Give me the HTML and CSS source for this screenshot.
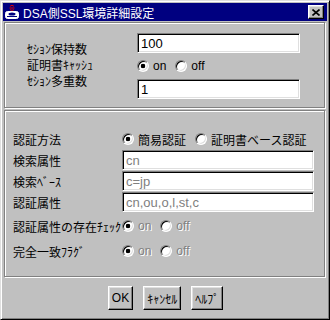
FILE: index.html
```html
<!DOCTYPE html>
<html lang="ja">
<head>
<meta charset="utf-8">
<title>DSA側SSL環境詳細設定</title>
<link rel="stylesheet" href="styles.css">
</head>
<body>
<div class="window">
  <div class="titlebar">
    <svg class="app-icon" width="16" height="16" viewBox="0 0 16 16">
      <path d="M6 2.5c1-1.5 3-1.5 4 0M5.5 4h5M6 5.5c1 1 3 1 4 0" stroke="#e00000" fill="none"/>
      <rect x="1.5" y="7.5" width="13" height="7" rx="2" fill="#fff" stroke="#fff"/>
      <ellipse cx="8" cy="10" rx="3.5" ry="1.5" fill="#000080"/>
      <path d="M3 12.5h10" stroke="#000080"/>
    </svg>
    <span class="title">DSA側SSL環境詳細設定</span>
    <span class="close-btn">
      <svg width="8" height="7" viewBox="0 0 8 7"><path d="M0.5 0.5L7.5 6.5M7.5 0.5L0.5 6.5" stroke="#000" stroke-width="1.6"/></svg>
    </span>
  </div>

  <div class="panel panel-session">
    <div class="session-labels">
      <div class="label">ｾｼｮﾝ保持数</div>
      <div class="label">証明書ｷｬｯｼｭ</div>
      <div class="label">ｾｼｮﾝ多重数</div>
    </div>
    <div class="session-controls">
      <div class="field">100</div>
      <div class="radio-group row-cache">
        <span class="radio checked"></span><span class="opt">on</span>
        <span class="radio"></span><span class="opt">off</span>
      </div>
      <div class="field">1</div>
    </div>
  </div>

  <div class="panel panel-auth">
    <div class="row row-method">
      <div class="label auth-label">認証方法</div>
      <div class="radio-group">
        <span class="radio checked"></span><span class="opt">簡易認証</span>
        <span class="radio"></span><span class="opt">証明書ベース認証</span>
      </div>
    </div>
    <div class="row row-field">
      <div class="label auth-label">検索属性</div>
      <div class="field wide disabled">cn</div>
    </div>
    <div class="row row-field">
      <div class="label auth-label">検索ﾍﾞｰｽ</div>
      <div class="field wide disabled">c=jp</div>
    </div>
    <div class="row row-field">
      <div class="label auth-label">認証属性</div>
      <div class="field wide disabled">cn,ou,o,l,st,c</div>
    </div>
    <div class="row row-check">
      <div class="label auth-label">認証属性の存在ﾁｪｯｸ</div>
      <div class="radio-group">
        <span class="radio checked"></span><span class="opt disabled-text">on</span>
        <span class="radio"></span><span class="opt disabled-text">off</span>
      </div>
    </div>
    <div class="row row-flag">
      <div class="label auth-label">完全一致ﾌﾗｸﾞ</div>
      <div class="radio-group">
        <span class="radio checked"></span><span class="opt disabled-text">on</span>
        <span class="radio"></span><span class="opt disabled-text">off</span>
      </div>
    </div>
  </div>

  <div class="buttons">
    <span class="btn">OK</span>
    <span class="btn">ｷｬﾝｾﾙ</span>
    <span class="btn">ﾍﾙﾌﾟ</span>
  </div>
</div>
</body>
</html>
```

FILE: styles.css
```css
html, body {
  margin: 0;
  padding: 0;
  background: #c0c0c0;
}

.window {
  box-sizing: border-box;
  width: 330px;
  height: 320px;
  border: 1px solid;
  border-color: #dfdfdf #000 #000 #dfdfdf;
  box-shadow: inset 1px 1px 0 #fff, inset -1px -1px 0 #808080;
  padding: 2px;
  background: #c0c0c0;
  display: flex;
  flex-direction: column;
  font-family: "Liberation Sans", "Noto Sans CJK JP", sans-serif;
  font-size: 12px;
  color: #000;
}

/* title bar */
.titlebar {
  height: 18px;
  flex: none;
  background: #000080;
  display: flex;
  align-items: center;
  padding: 0 3px 0 1px;
}
.app-icon {
  flex: none;
  display: block;
}
.title {
  color: #fff;
  font-size: 12px;
  margin-left: 3px;
  flex: 1;
  white-space: nowrap;
}
.close-btn {
  box-sizing: border-box;
  width: 16px;
  height: 14px;
  flex: none;
  background: #c0c0c0;
  border: 1px solid;
  border-color: #fff #000 #000 #fff;
  box-shadow: inset -1px -1px 0 #808080, inset 1px 1px 0 #dfdfdf;
  display: flex;
  align-items: center;
  justify-content: center;
}
.close-btn svg { display: block; }

/* etched panels */
.panel {
  box-sizing: border-box;
  border: 1px solid #808080;
  box-shadow: inset 1px 1px 0 #fff, 1px 1px 0 #fff;
  margin-left: 1px;
  margin-right: 2px;
  flex: none;
}

.panel-session {
  margin-top: 1px;
  height: 86px;
  display: flex;
  padding: 10px 0 0 22px;
}
.session-labels {
  width: 110px;
  flex: none;
  margin-top: 9px;
  display: flex;
  flex-direction: column;
}
.session-labels .label {
  height: 16px;
  line-height: 16px;
}
.session-controls {
  width: 163px;
  display: flex;
  flex-direction: column;
}
.row-cache {
  height: 26px;
}

.label {
  white-space: nowrap;
  font-size: 12px;
}

/* fields */
.field {
  box-sizing: border-box;
  height: 20px;
  border: 1px solid;
  border-color: #808080 #fff #fff #808080;
  box-shadow: inset 1px 1px 0 #000, inset -1px -1px 0 #dfdfdf;
  background: #fff;
  padding: 0 3px;
  font-size: 13px;
  display: flex;
  align-items: center;
  white-space: nowrap;
}
.field.wide { width: 192px; }
.field.disabled { color: #808080; }

/* radios */
.radio-group {
  display: flex;
  align-items: center;
}
.radio {
  box-sizing: border-box;
  width: 12px;
  height: 12px;
  flex: none;
  border-radius: 50%;
  border: 1px solid;
  border-color: #808080 #fff #fff #808080;
  box-shadow: inset 1px 1px 0 #000, inset -1px -1px 0 #dfdfdf;
  background: #fff;
}
.radio.checked {
  background: radial-gradient(circle at 50% 50%, #000 0, #000 2px, #fff 2.6px);
}
.opt {
  margin-left: 4px;
  margin-right: 9px;
  white-space: nowrap;
}
.disabled-text {
  color: #808080;
  text-shadow: 1px 1px 0 #fff;
}

/* auth panel */
.panel-auth {
  margin-top: 2px;
  height: 167px;
  padding: 17px 0 0 8px;
  display: flex;
  flex-direction: column;
}
.row {
  display: flex;
  align-items: center;
}
.auth-label {
  width: 109px;
  flex: none;
}
.row-method { height: 22px; }
.row-field { height: 20px; margin-bottom: 1px; }
.row-check { height: 26px; }
.row-flag { height: 24px; }

/* buttons */
.buttons {
  display: flex;
  justify-content: center;
  gap: 10px;
  margin-top: 9px;
  margin-left: 1px;
}
.btn {
  box-sizing: border-box;
  height: 24px;
  padding: 0 3px;
  border: 1px solid;
  border-color: #fff #000 #000 #fff;
  box-shadow: inset -1px -1px 0 #808080, inset 1px 1px 0 #dfdfdf;
  display: flex;
  align-items: center;
  justify-content: center;
  font-size: 12px;
  white-space: nowrap;
}
```
